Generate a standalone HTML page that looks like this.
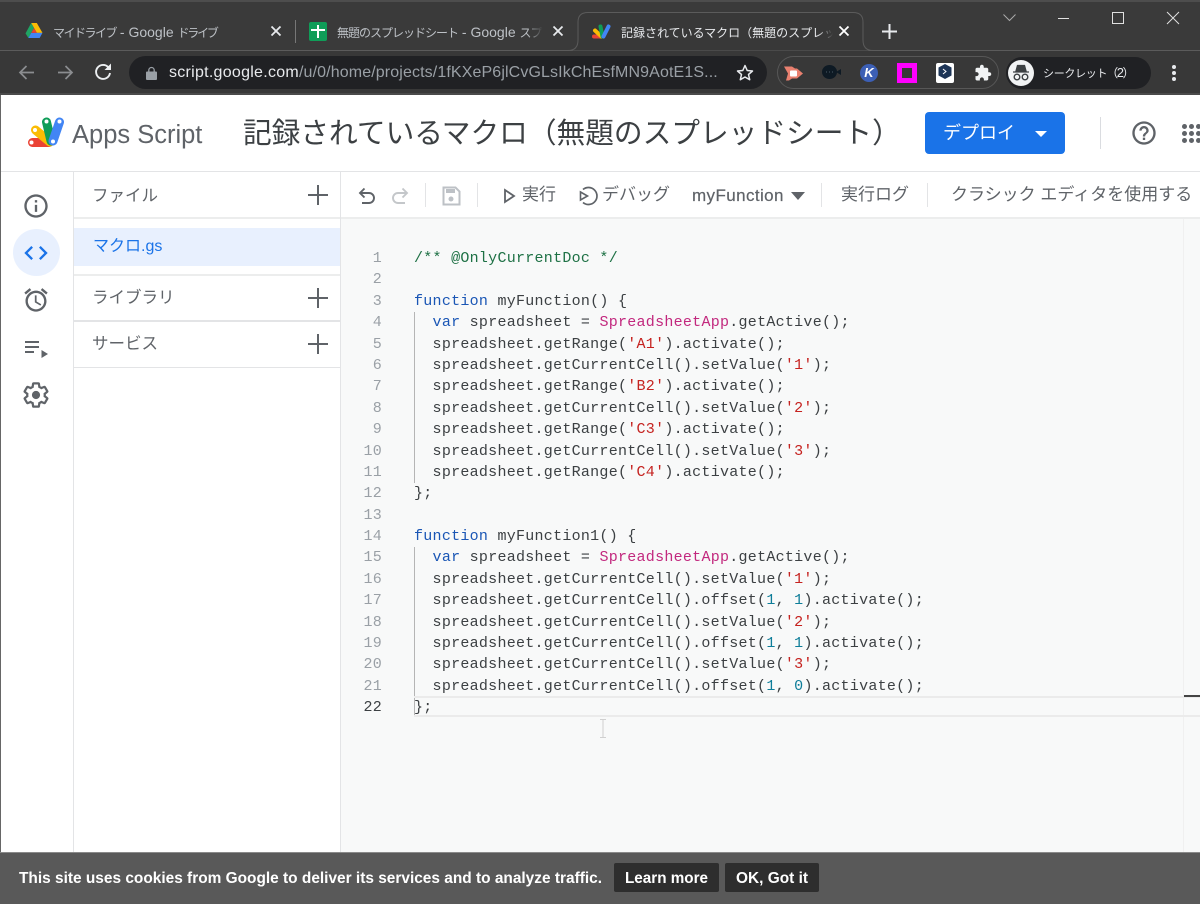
<!DOCTYPE html>
<html lang="ja">
<head>
<meta charset="utf-8">
<title>Apps Script</title>
<style>
html,body{margin:0;padding:0;width:1200px;height:904px;overflow:hidden;background:#fff}
*{box-sizing:border-box}
body{position:relative;font-family:"Liberation Sans","Noto Sans CJK JP",sans-serif}
.a{position:absolute;white-space:nowrap}
svg{position:absolute;overflow:visible}
.tt{color:#bdc1c6;font-size:14px;line-height:20px;top:21px;overflow:hidden}
.tt span{font-size:12px}
.sb{color:#5f6368;font-size:16.500px;line-height:22px;left:92px}
.tb{color:#5f6368;font-size:17px;line-height:22px;top:183px}
#code{position:absolute;left:341px;top:248px;width:859px;font-family:"Liberation Mono","DejaVu Sans Mono",monospace;font-size:15px;letter-spacing:.27px;line-height:21.4px;color:#3c4043}
#code div{height:21.4px;position:relative;white-space:pre}
#code i{font-style:normal;position:absolute;right:818px;color:#9aa0a6}
#code b{font-weight:normal;position:absolute;left:73px}
.k{color:#1a56b5}.c{color:#1e7145}.s{color:#c5221f}.p{color:#c2287e}.n{color:#0d7d99}
</style>
</head>
<body>
<!-- Chrome frame -->
<div class="a" style="left:0;top:0;width:1200px;height:50px;background:#3a3a3a"></div>
<div class="a" style="left:0;top:0;width:1200px;height:2px;background:#4d4d4d"></div>
<div class="a" style="left:0;top:50px;width:1200px;height:45px;background:#383838;border-top:1px solid #5b5b5b"></div>
<div class="a" style="left:0;top:93px;width:1200px;height:2px;background:#4a4a4a"></div>

<!-- tab 1 -->
<svg style="left:25px;top:23px" width="18" height="16" viewBox="0 0 18 17">
<path d="M6 0h6l6 10.500h-6z" fill="#fbbc04"/>
<path d="M6 0l3 5.500L3 16 0 11z" fill="#1fa463"/><path d="M3 16l3-5.500h12L15 16z" fill="#4285f4"/><path d="M6 10.500h6l-3-5z" fill="#ea4335"/>
</svg>
<div class="a tt" style="left:53px;top:22px;width:180px"><span style="letter-spacing:-1.500px">マイドライブ</span> - Google <span style="letter-spacing:-2.200px">ドライブ</span></div>
<svg style="left:271px;top:26px" width="10" height="10"><path d="M0.500 0.500l9 9m0-9l-9 9" stroke="#e8eaed" stroke-width="1.800"/></svg>
<div class="a" style="left:295px;top:20px;width:1px;height:23px;background:#777"></div>
<!-- tab 2 -->
<div class="a" style="left:309px;top:22px;width:18px;height:19px;background:#0f9d58;border-radius:2px"></div>
<div class="a" style="left:311px;top:29px;width:14px;height:2px;background:#fff"></div>
<div class="a" style="left:317px;top:25px;width:2px;height:13px;background:#fff"></div>
<div class="a tt" style="left:337px;top:22px;width:206px;-webkit-mask-image:linear-gradient(90deg,#000 190px,transparent)"><span style="letter-spacing:-1px">無題のスプレッドシート</span> - Google <span style="letter-spacing:-1px">スプレッドシート</span></div>
<svg style="left:553px;top:26px" width="10" height="10"><path d="M0.500 0.500l9 9m0-9l-9 9" stroke="#e8eaed" stroke-width="1.800"/></svg>

<!-- tab strip line & active tab -->
<div class="a" style="left:0;top:50px;width:568px;height:1px;background:#5b5b5b"></div>
<svg style="left:0;top:0" width="1200" height="52">
<path d="M0 50.500H568Q578 50.500 578 40V22Q578 12.500 588 12.500H853Q863 12.500 863 22V40Q863 50.500 873 50.500H1200" fill="#383838" stroke="#5b5b5b"/>
<path d="M570 51H872V52H570z" fill="#383838"/>
</svg>
<svg style="left:592px;top:23px" width="19" height="17" viewBox="0 0 38 30">
<g stroke-linecap="round" stroke-width="8"><path d="M4 25H18" stroke="#ea4335"/><path d="M6 13L19 25" stroke="#fbbc04"/><path d="M17 5L21 25" stroke="#0f9d58"/><path d="M33 5L23 25" stroke="#4285f4"/></g>
</svg>
<div class="a tt" style="left:621px;top:22px;width:212px;color:#e8eaed;-webkit-mask-image:linear-gradient(90deg,#000 196px,transparent)"><span>記録されているマクロ（無題のスプレッドシート）</span></div>
<svg style="left:839px;top:26px" width="10" height="10"><path d="M0.500 0.500l9 9m0-9l-9 9" stroke="#fff" stroke-width="1.800"/></svg>
<svg style="left:882px;top:24px" width="15" height="15"><path d="M7.500 0v15M0 7.500h15" stroke="#e8eaed" stroke-width="2"/></svg>

<!-- window controls -->
<svg style="left:1003px;top:14px" width="13" height="8"><path d="M.5 .5l6 6 6-6" fill="none" stroke="#aaa"/></svg>
<div class="a" style="left:1058px;top:18px;width:11px;height:1px;background:#e0e0e0"></div>
<div class="a" style="left:1112px;top:12px;width:12px;height:12px;border:1px solid #e0e0e0"></div>
<svg style="left:1167px;top:12px" width="12" height="12"><path d="M0 0l12 12m0-12L0 12" stroke="#e0e0e0" stroke-width="1"/></svg>

<!-- nav -->
<svg style="left:18px;top:64px" width="17" height="17"><path d="M16 8.500H2M8.500 2L2 8.500 8.500 15" fill="none" stroke="#8b8d90" stroke-width="1.700"/></svg>
<svg style="left:57px;top:64px" width="17" height="17"><path d="M1 8.500H15M8.500 2L15 8.500 8.500 15" fill="none" stroke="#8b8d90" stroke-width="1.700"/></svg>
<svg style="left:94px;top:63px" width="18" height="18"><path d="M14.500 4.500A7 7 0 1 0 16 10" fill="none" stroke="#eceff1" stroke-width="1.900"/><path d="M10.500 7H17V.5z" fill="#eceff1"/></svg>
<div class="a" style="left:129px;top:56px;width:638px;height:33px;border-radius:17px;background:#202124"></div>
<svg style="left:146px;top:67px" width="11" height="13"><rect y="4.500" width="11" height="8.500" rx="1" fill="#9aa0a6"/><path d="M2.800 5V3.200a2.700 2.700 0 0 1 5.400 0V5" fill="none" stroke="#9aa0a6" stroke-width="1.300"/></svg>
<div class="a" style="left:169px;top:63px;font-size:16px;line-height:20px;color:#9aa0a6;letter-spacing:.12px"><span style="color:#e8eaed;letter-spacing:.27px">script.google.com</span>/u/0/home/projects/1fKXeP6jlCvGLsIkChEsfMN9AotE1S...</div>
<svg style="left:736px;top:64px" width="18" height="17" viewBox="0 0 18 17"><path d="M9 1.500l2.200 5 5.300.5-4 3.500 1.200 5.200L9 13l-4.700 2.700 1.200-5.200-4-3.500 5.300-.5z" fill="none" stroke="#e8eaed" stroke-width="1.500" stroke-linejoin="round"/></svg>

<!-- extensions -->
<div class="a" style="left:777px;top:56px;width:222px;height:33px;border-radius:17px;border:1px solid #575757"></div>
<svg style="left:784px;top:65px" width="20" height="16"><path d="M0 1.500h8l3 2h2l6 5-6 5H8l-3 2H2l2-7z" fill="#e9806f"/><rect x="6" y="5.500" width="7" height="6" rx="1" fill="#fff"/></svg>
<svg style="left:821px;top:64px" width="21" height="18"><ellipse cx="8.500" cy="8" rx="7.500" ry="7" fill="#0e1a24"/><path d="M15 8l5-3v6z" fill="#0e1a24"/><path d="M5 8h7" stroke="#4b5a66" stroke-dasharray="1 2"/></svg>
<div class="a" style="left:860px;top:64px;width:18px;height:18px;border-radius:50%;background:#3c5fb5;color:#fff;font:italic bold 13px/18px 'Liberation Sans',sans-serif;text-align:center">K</div>
<div class="a" style="left:897px;top:63px;width:20px;height:20px;border:5px solid #f0f;background:#383838"></div>
<div class="a" style="left:936px;top:63px;width:18px;height:20px;background:#fff;border-radius:2px"></div>
<svg style="left:938px;top:64px" width="14" height="17"><path d="M7 0l6.500 3.500v8L7 15 .5 11.500v-8z" fill="#1d3557"/><path d="M5 5l3 2.500-3 2.500" fill="none" stroke="#fff"/></svg>
<svg style="left:974px;top:64px" width="18" height="18" viewBox="0 0 24 24"><path fill="#f1f3f4" d="M20.500 11H19V7c0-1.100-.9-2-2-2h-4V3.500C13 2.120 11.880 1 10.500 1S8 2.120 8 3.500V5H4c-1.100 0-1.990.9-1.990 2v3.800H3.500c1.490 0 2.700 1.210 2.700 2.700s-1.210 2.700-2.700 2.700H2V20c0 1.100.9 2 2 2h3.800v-1.500c0-1.490 1.210-2.700 2.700-2.700 1.490 0 2.700 1.210 2.700 2.700V22H17c1.100 0 2-.9 2-2v-4h1.500c1.380 0 2.500-1.120 2.500-2.500S21.880 11 20.500 11z"/></svg>

<!-- incognito -->
<div class="a" style="left:1006px;top:57px;width:145px;height:32px;border-radius:16px;background:#202124"></div>
<div class="a" style="left:1008px;top:60px;width:26px;height:26px;border-radius:50%;background:#f1f3f4"></div>
<svg style="left:1012px;top:64px" width="18" height="18" viewBox="0 0 18 18"><path d="M1 8h16M4 7l1.500-5.500h7L14 7z" fill="#3c4043" stroke="#3c4043" stroke-width="1.300"/><circle cx="5" cy="13" r="2.800" fill="none" stroke="#3c4043" stroke-width="1.400"/><circle cx="13" cy="13" r="2.800" fill="none" stroke="#3c4043" stroke-width="1.400"/></svg>
<div class="a" style="left:1043px;top:63px;font-size:11px;line-height:20px;color:#e8eaed;letter-spacing:-.3px">シークレット<span style="font-size:12px;letter-spacing:-1.500px;margin-left:-1px">（<span style="font-size:13px">2</span>）</span></div>
<div class="a" style="left:1172px;top:65px;width:4px;height:4px;border-radius:50%;background:#e8eaed"></div>
<div class="a" style="left:1172px;top:71px;width:4px;height:4px;border-radius:50%;background:#e8eaed"></div>
<div class="a" style="left:1172px;top:77px;width:4px;height:4px;border-radius:50%;background:#e8eaed"></div>

<!-- App header -->
<svg style="left:27px;top:116px" width="39" height="32" viewBox="0 0 39 32">
<g stroke-linecap="round" stroke-width="9">
<path d="M5.500 26.500H22" stroke="#ea4335"/>
<path d="M8.500 14L23 26" stroke="#fbbc04"/>
<path d="M19.500 6L24 25" stroke="#0f9d58"/>
<path d="M32.500 6L26 25" stroke="#4285f4"/>
</g>
<circle cx="4.500" cy="26.500" r="2" fill="#fff"/><circle cx="8" cy="14" r="2" fill="#fff"/><circle cx="19.500" cy="5.500" r="2" fill="#fff"/><circle cx="32.500" cy="5.500" r="2" fill="#fff"/><circle cx="26" cy="25.500" r="2" fill="#fff"/>
</svg>
<div class="a" style="left:72px;top:118px;font-size:25.500px;line-height:34px;color:#5f6368">Apps Script</div>
<div class="a" style="left:243px;top:115px;font-size:28.700px;line-height:38px;color:#3c4043">記録されているマクロ（無題のスプレッドシート）</div>
<div class="a" style="left:925px;top:112px;width:140px;height:42px;background:#1a73e8;border-radius:4px"></div>
<div class="a" style="left:943px;top:121px;font-size:18px;line-height:24px;color:#fff">デプロイ</div>
<svg style="left:1035px;top:131px" width="12" height="6"><path d="M0 0h12L6 6z" fill="#fff"/></svg>
<div class="a" style="left:1100px;top:117px;width:1px;height:32px;background:#dadce0"></div>
<svg style="left:1130px;top:119px" width="28" height="28" viewBox="0 0 24 24"><path fill="#5f6368" d="M11 18h2v-2h-2v2zm1-16C6.480 2 2 6.480 2 12s4.480 10 10 10 10-4.480 10-10S17.520 2 12 2zm0 18c-4.410 0-8-3.590-8-8s3.590-8 8-8 8 3.590 8 8-3.590 8-8 8zm0-14c-2.210 0-4 1.790-4 4h2c0-1.100.9-2 2-2s2 .9 2 2c0 2-3 1.750-3 5h2c0-2.250 3-2.500 3-5 0-2.210-1.790-4-4-4z"/></svg>
<svg style="left:1182px;top:124px" width="18" height="20" fill="#5f6368"><circle cx="2.500" cy="2.500" r="2.500"/><circle cx="9.500" cy="2.500" r="2.500"/><circle cx="16.500" cy="2.500" r="2.500"/><circle cx="2.500" cy="9.500" r="2.500"/><circle cx="9.500" cy="9.500" r="2.500"/><circle cx="16.500" cy="9.500" r="2.500"/><circle cx="2.500" cy="16.500" r="2.500"/><circle cx="9.500" cy="16.500" r="2.500"/><circle cx="16.500" cy="16.500" r="2.500"/></svg>
<div class="a" style="left:0;top:171px;width:1200px;height:1px;background:#e3e4e6"></div>

<!-- left frame edge -->
<div class="a" style="left:0;top:95px;width:1px;height:758px;background:#666"></div>

<!-- rail -->
<div class="a" style="left:73px;top:172px;width:1px;height:681px;background:#e3e4e6"></div>
<svg style="left:22px;top:192px" width="28" height="28" viewBox="0 0 24 24"><path fill="#5f6368" d="M11 7h2v2h-2zm0 4h2v6h-2zm1-9C6.480 2 2 6.480 2 12s4.480 10 10 10 10-4.480 10-10S17.520 2 12 2zm0 18c-4.410 0-8-3.590-8-8s3.590-8 8-8 8 3.590 8 8-3.590 8-8 8z"/></svg>
<div class="a" style="left:13px;top:229px;width:47px;height:47px;border-radius:50%;background:#e8f0fe"></div>
<svg style="left:22px;top:239px" width="28" height="28" viewBox="0 0 24 24"><path fill="#1a73e8" d="M9.400 16.600L4.800 12l4.600-4.600L8 6l-6 6 6 6 1.400-1.400zm5.200 0l4.600-4.600-4.600-4.600L16 6l6 6-6 6-1.400-1.400z"/></svg>
<svg style="left:22px;top:286px" width="28" height="28" viewBox="0 0 24 24"><path fill="#5f6368" d="M22 5.720l-4.600-3.860-1.290 1.530 4.600 3.860L22 5.720zM7.880 3.390L6.600 1.860 2 5.710l1.290 1.530 4.590-3.850zM12.500 8H11v6l4.750 2.850.75-1.230-4-2.370V8zM12 4c-4.970 0-9 4.030-9 9s4.030 9 9 9 9-4.030 9-9-4.030-9-9-9zm0 16c-3.870 0-7-3.130-7-7s3.130-7 7-7 7 3.130 7 7-3.130 7-7 7z"/></svg>
<svg style="left:25px;top:340px" width="24" height="19" fill="#5f6368"><rect y="1" width="14" height="2"/><rect y="6" width="14" height="2"/><rect y="11" width="9" height="2"/><path d="M16.500 10l6.500 4-6.500 4z"/></svg>
<svg style="left:22px;top:381px" width="28" height="28" viewBox="0 0 24 24"><path fill="none" stroke="#5f6368" stroke-width="1.900" d="M19.430 12.980c.04-.32.07-.64.07-.98s-.03-.66-.07-.98l2.110-1.650c.19-.15.24-.42.12-.64l-2-3.460c-.12-.22-.39-.3-.61-.22l-2.490 1c-.52-.4-1.080-.73-1.690-.98l-.38-2.650C14.460 2.180 14.250 2 14 2h-4c-.25 0-.46.18-.49.42l-.38 2.650c-.61.25-1.170.59-1.690.98l-2.490-1c-.23-.09-.49 0-.61.22l-2 3.460c-.13.22-.07.49.12.64l2.110 1.650c-.04.32-.07.65-.07.98s.03.66.07.98l-2.110 1.650c-.19.15-.24.42-.12.64l2 3.460c.12.22.39.3.61.22l2.490-1c.52.4 1.080.73 1.690.98l.38 2.650c.03.24.24.42.49.42h4c.25 0 .46-.18.49-.42l.38-2.650c.61-.25 1.170-.59 1.690-.98l2.490 1c.23.09.49 0 .61-.22l2-3.460c.12-.22.07-.49-.12-.64l-2.110-1.650z"/><circle cx="12" cy="12" r="3.500" fill="#5f6368"/></svg>

<!-- side panel -->
<div class="a sb" style="top:185px">ファイル</div>
<svg style="left:308px;top:185px" width="20" height="20"><path d="M10 0v20M0 10h20" stroke="#5f6368" stroke-width="2"/></svg>
<div class="a" style="left:74px;top:217px;width:266px;height:2px;background:#eceded"></div>
<div class="a" style="left:74px;top:228px;width:266px;height:38px;background:#e8f0fe"></div>
<div class="a sb" style="top:236px;left:93px;font-size:16px;color:#1a73e8">マクロ.gs</div>
<div class="a" style="left:74px;top:274px;width:266px;height:2px;background:#eceded"></div>
<div class="a sb" style="top:287px">ライブラリ</div>
<svg style="left:308px;top:288px" width="20" height="20"><path d="M10 0v20M0 10h20" stroke="#5f6368" stroke-width="2"/></svg>
<div class="a" style="left:74px;top:320px;width:266px;height:2px;background:#e3e4e6"></div>
<div class="a sb" style="top:333px">サービス</div>
<svg style="left:308px;top:334px" width="20" height="20"><path d="M10 0v20M0 10h20" stroke="#5f6368" stroke-width="2"/></svg>
<div class="a" style="left:74px;top:367px;width:266px;height:1px;background:#e3e4e6"></div>
<div class="a" style="left:340px;top:172px;width:1px;height:681px;background:#e3e4e6"></div>

<!-- editor -->
<div class="a" style="left:341px;top:219px;width:859px;height:634px;background:#f8f9f9"></div>
<div class="a" style="left:341px;top:217px;width:859px;height:2px;background:#eceded"></div>
<div class="a" style="left:1183px;top:219px;width:1px;height:634px;background:#f0f0f0"></div>
<div class="a" style="left:414px;top:312px;width:1px;height:171px;background:#b5b5b5"></div>
<div class="a" style="left:414px;top:547px;width:1px;height:170px;background:#b5b5b5"></div>
<div class="a" style="left:414px;top:696px;width:786px;height:21px;border-top:2px solid #ebebeb;border-bottom:2px solid #ebebeb"></div>
<div class="a" style="left:1184px;top:695px;width:16px;height:2px;background:#444"></div>
<svg style="left:599px;top:719px" width="8" height="19"><path d="M1 .5h6M4 .5v18M1 18.500h6" stroke="#d0d0d0" fill="none"/></svg>

<!-- editor toolbar -->
<svg style="left:358px;top:186px" width="18" height="20" viewBox="0 0 18 20"><path d="M6.500 2.500L2 7l4.500 4.500M2 7h9a5 5 0 0 1 0 10H4" fill="none" stroke="#5f6368" stroke-width="1.900"/></svg>
<svg style="left:391px;top:186px" width="18" height="20" viewBox="0 0 18 20"><path d="M11.500 2.500L16 7l-4.500 4.500M16 7H7a5 5 0 0 0 0 10h7" fill="none" stroke="#c4c7ca" stroke-width="1.900"/></svg>
<div class="a" style="left:425px;top:183px;width:1px;height:24px;background:#e3e4e6"></div>
<svg style="left:441px;top:186px" width="20" height="20" viewBox="0 0 20 20"><path d="M2.500 1.500h12l4 4v13h-16z" fill="none" stroke="#bdc1c6" stroke-width="2"/><rect x="5" y="3" width="9" height="4" fill="#bdc1c6"/><circle cx="10" cy="13" r="2.500" fill="#bdc1c6"/></svg>
<div class="a" style="left:477px;top:183px;width:1px;height:24px;background:#e3e4e6"></div>
<svg style="left:504px;top:189px" width="11" height="14"><path d="M1 1l9 6-9 6z" fill="none" stroke="#5f6368" stroke-width="1.800"/></svg>
<div class="a tb" style="left:522px;top:184px">実行</div>
<svg style="left:579px;top:186px" width="20" height="20" viewBox="0 0 20 20"><path d="M4 3.500A8.500 8.500 0 1 1 4 16.500" fill="none" stroke="#5f6368" stroke-width="1.700"/><path d="M1.500 6l7 4-7 4z" fill="#fff" stroke="#5f6368" stroke-width="1.600"/></svg>
<div class="a tb" style="left:602px;top:184px">デバッグ</div>
<div class="a tb" style="left:692px;top:185px;font-size:17px;letter-spacing:.4px;-webkit-text-stroke:.2px #5f6368">myFunction</div>
<svg style="left:791px;top:192px" width="14" height="8"><path d="M0 0h14L7 8z" fill="#5f6368"/></svg>
<div class="a" style="left:821px;top:183px;width:1px;height:24px;background:#e3e4e6"></div>
<div class="a tb" style="left:841px;top:184px">実行ログ</div>
<div class="a" style="left:927px;top:183px;width:1px;height:24px;background:#e3e4e6"></div>
<div class="a tb" style="left:951px;top:184px">クラシック エディタを使用する</div>

<!-- code -->
<div id="code">
<div><i>1</i><b><span class="c">/** @OnlyCurrentDoc */</span></b></div>
<div><i>2</i></div>
<div><i>3</i><b><span class="k">function</span> myFunction() {</b></div>
<div><i>4</i><b>  <span class="k">var</span> spreadsheet = <span class="p">SpreadsheetApp</span>.getActive();</b></div>
<div><i>5</i><b>  spreadsheet.getRange(<span class="s">'A1'</span>).activate();</b></div>
<div><i>6</i><b>  spreadsheet.getCurrentCell().setValue(<span class="s">'1'</span>);</b></div>
<div><i>7</i><b>  spreadsheet.getRange(<span class="s">'B2'</span>).activate();</b></div>
<div><i>8</i><b>  spreadsheet.getCurrentCell().setValue(<span class="s">'2'</span>);</b></div>
<div><i>9</i><b>  spreadsheet.getRange(<span class="s">'C3'</span>).activate();</b></div>
<div><i>10</i><b>  spreadsheet.getCurrentCell().setValue(<span class="s">'3'</span>);</b></div>
<div><i>11</i><b>  spreadsheet.getRange(<span class="s">'C4'</span>).activate();</b></div>
<div><i>12</i><b>};</b></div>
<div><i>13</i></div>
<div><i>14</i><b><span class="k">function</span> myFunction1() {</b></div>
<div><i>15</i><b>  <span class="k">var</span> spreadsheet = <span class="p">SpreadsheetApp</span>.getActive();</b></div>
<div><i>16</i><b>  spreadsheet.getCurrentCell().setValue(<span class="s">'1'</span>);</b></div>
<div><i>17</i><b>  spreadsheet.getCurrentCell().offset(<span class="n">1</span>, <span class="n">1</span>).activate();</b></div>
<div><i>18</i><b>  spreadsheet.getCurrentCell().setValue(<span class="s">'2'</span>);</b></div>
<div><i>19</i><b>  spreadsheet.getCurrentCell().offset(<span class="n">1</span>, <span class="n">1</span>).activate();</b></div>
<div><i>20</i><b>  spreadsheet.getCurrentCell().setValue(<span class="s">'3'</span>);</b></div>
<div><i>21</i><b>  spreadsheet.getCurrentCell().offset(<span class="n">1</span>, <span class="n">0</span>).activate();</b></div>
<div><i style="color:#3c4043">22</i><b>};</b></div>
</div>

<!-- cookie bar -->
<div class="a" style="left:0;top:852px;width:1200px;height:52px;background:#595959;border-top:1px solid #8a8a8a"></div>
<svg style="left:0;top:852px" width="850" height="52" font-family="Liberation Sans, sans-serif" font-size="16" font-weight="bold" fill="#fff">
<text x="19" y="31" textLength="583" lengthAdjust="spacingAndGlyphs">This site uses cookies from Google to deliver its services and to analyze traffic.</text>
</svg>
<div class="a" style="left:614px;top:863px;width:105px;height:29px;background:#2e2e2e;border-radius:2px"></div>
<div class="a" style="left:725px;top:863px;width:94px;height:29px;background:#2e2e2e;border-radius:2px"></div>
<svg style="left:0;top:852px" width="850" height="52" font-family="Liberation Sans, sans-serif" font-size="16" font-weight="bold" fill="#fff">
<text x="625" y="31" textLength="83" lengthAdjust="spacingAndGlyphs">Learn more</text>
<text x="736" y="31" textLength="72" lengthAdjust="spacingAndGlyphs">OK, Got it</text>
</svg>
</body>
</html>
